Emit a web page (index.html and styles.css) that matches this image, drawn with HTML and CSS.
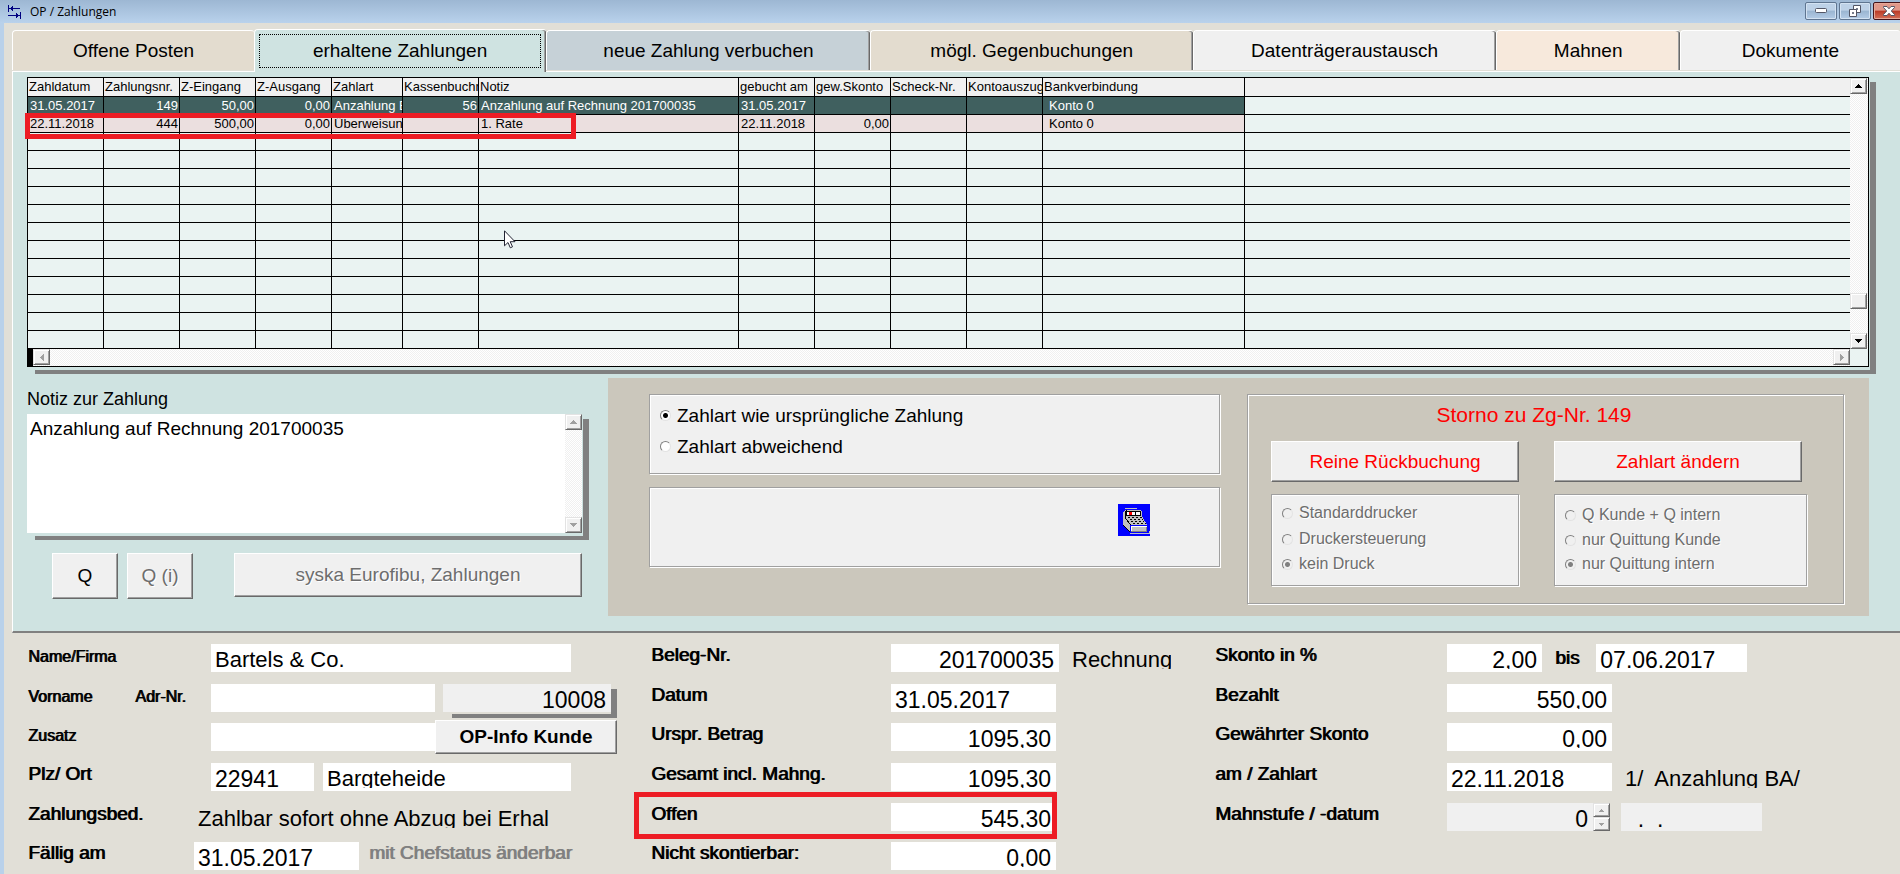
FILE: index.html
```html
<!DOCTYPE html>
<html lang="de">
<head>
<meta charset="utf-8">
<title>OP / Zahlungen</title>
<link rel="stylesheet" href="styles.css">
</head>
<body>
<header class="titlebar">
  <svg class="app-icon" width="13" height="14" viewBox="0 0 13 14" fill="none" stroke="#000080" stroke-width="1">
    <path d="M.5 0v7M1 3.500h11M12.500 7v7M0 10.500h12"/>
    <path d="M4.500 1v5M3.500 2v3M2.500 3v1M8.500 8v5M9.500 9v3M10.500 10v1"/>
  </svg>
  <h1 class="title">OP / Zahlungen</h1>
  <div class="win-buttons">
    <button class="win-btn" type="button" aria-label="Minimieren">
      <svg width="12" height="6" viewBox="0 0 12 6"><rect x=".5" y=".5" width="11" height="4" rx="1" fill="#fff" stroke="#535666"/></svg>
    </button>
    <button class="win-btn" type="button" aria-label="Wiederherstellen">
      <svg width="12" height="12" viewBox="0 0 12 12" stroke="#535666"><path d="M4.500.5h7v7h-7z" fill="#fff"/><path d="M7.500 3.500h1v1h-1z" fill="#9ab4d0"/><path d="M.5 4.500h7v7h-7z" fill="#fff"/><path d="M3.500 7.500h1v1h-1z" fill="#9ab4d0"/></svg>
    </button>
    <button class="win-btn close" type="button" aria-label="Schließen">
      <svg width="12" height="10" viewBox="0 0 12 10"><path d="M.5.5h3.500L6 2.800 8 .5h3.500v1L8.300 5l3.200 3.500v1H8L6 7.200 4 9.500H.5v-1L3.700 5 .5 1.500z" fill="#fff" stroke="#535666"/></svg>
    </button>
  </div>
</header>

<main class="window">
  <nav class="tabs" role="tablist">
    <button class="tab t-posten" role="tab" type="button">Offene Posten</button>
    <button class="tab t-erhalten active" role="tab" type="button" aria-selected="true"><span class="focus">erhaltene Zahlungen</span></button>
    <button class="tab t-neu" role="tab" type="button">neue Zahlung verbuchen</button>
    <button class="tab t-gegen" role="tab" type="button">mögl. Gegenbuchungen</button>
    <button class="tab t-daten" role="tab" type="button">Datenträgeraustausch</button>
    <button class="tab t-mahnen" role="tab" type="button">Mahnen</button>
    <button class="tab t-doku" role="tab" type="button">Dokumente</button>
  </nav>

  <section class="panel">
    <div class="grid-frame shadowed">
      <table class="payments">
        <colgroup><col class="w76"><col class="w76"><col class="w76"><col class="w76"><col class="w71"><col class="w76"><col class="w260"><col class="w76"><col class="w76"><col class="w76"><col class="w76"><col class="w202"><col></colgroup>
        <thead>
          <tr><th>Zahldatum</th><th>Zahlungsnr.</th><th>Z-Eingang</th><th>Z-Ausgang</th><th>Zahlart</th><th>Kassenbuchnr</th><th>Notiz</th><th>gebucht am</th><th>gew.Skonto</th><th>Scheck-Nr.</th><th>Kontoauszug</th><th>Bankverbindung</th><th></th></tr>
        </thead>
        <tbody>
          <tr class="selected"><td>31.05.2017</td><td class="num">149</td><td class="num">50,00</td><td class="num">0,00</td><td>Anzahlung B</td><td class="num">56</td><td>Anzahlung auf Rechnung 201700035</td><td>31.05.2017</td><td></td><td></td><td></td><td class="bank">Konto 0</td><td></td></tr>
          <tr class="rose"><td>22.11.2018</td><td class="num">444</td><td class="num">500,00</td><td class="num">0,00</td><td>Überweisung</td><td></td><td>1. Rate</td><td>22.11.2018</td><td class="num">0,00</td><td></td><td></td><td class="bank">Konto 0</td><td></td></tr>
          <tr><td></td><td></td><td></td><td></td><td></td><td></td><td></td><td></td><td></td><td></td><td></td><td></td><td></td></tr>
          <tr><td></td><td></td><td></td><td></td><td></td><td></td><td></td><td></td><td></td><td></td><td></td><td></td><td></td></tr>
          <tr><td></td><td></td><td></td><td></td><td></td><td></td><td></td><td></td><td></td><td></td><td></td><td></td><td></td></tr>
          <tr><td></td><td></td><td></td><td></td><td></td><td></td><td></td><td></td><td></td><td></td><td></td><td></td><td></td></tr>
          <tr><td></td><td></td><td></td><td></td><td></td><td></td><td></td><td></td><td></td><td></td><td></td><td></td><td></td></tr>
          <tr><td></td><td></td><td></td><td></td><td></td><td></td><td></td><td></td><td></td><td></td><td></td><td></td><td></td></tr>
          <tr><td></td><td></td><td></td><td></td><td></td><td></td><td></td><td></td><td></td><td></td><td></td><td></td><td></td></tr>
          <tr><td></td><td></td><td></td><td></td><td></td><td></td><td></td><td></td><td></td><td></td><td></td><td></td><td></td></tr>
          <tr><td></td><td></td><td></td><td></td><td></td><td></td><td></td><td></td><td></td><td></td><td></td><td></td><td></td></tr>
          <tr><td></td><td></td><td></td><td></td><td></td><td></td><td></td><td></td><td></td><td></td><td></td><td></td><td></td></tr>
          <tr><td></td><td></td><td></td><td></td><td></td><td></td><td></td><td></td><td></td><td></td><td></td><td></td><td></td></tr>
          <tr><td></td><td></td><td></td><td></td><td></td><td></td><td></td><td></td><td></td><td></td><td></td><td></td><td></td></tr>
        </tbody>
      </table>
      <div class="vscroll">
        <button class="sb" type="button" aria-label="Nach oben"><svg width="7" height="4" viewBox="0 0 7 4"><path d="M3 0h1v1h1v1h1v1h1v1H0V3h1V2h1V1h1z"/></svg></button>
        <span class="sb thumb"></span>
        <button class="sb" type="button" aria-label="Nach unten"><svg width="7" height="4" viewBox="0 0 7 4"><path d="M0 0h7v1H6v1H5v1H4v1H3V3H2V2H1V1H0z"/></svg></button>
      </div>
      <div class="hscroll">
        <button class="sb off" type="button" disabled aria-label="Nach links"><svg width="4" height="7" viewBox="0 0 4 7"><path d="M4 0v7H3V6H2V5H1V4H0V3h1V2h1V1h1V0z"/></svg></button>
        <button class="sb off" type="button" disabled aria-label="Nach rechts"><svg width="4" height="7" viewBox="0 0 4 7"><path d="M0 0v7h1V6h1V5h1V4h1V3H3V2H2V1H1V0z"/></svg></button>
      </div>
      <span class="mark mark-row"></span>
      <svg class="cursor" width="12" height="19" viewBox="0 0 12 19"><path d="M.5.8v15l3.500-3.300 2.300 5.300 2.200-1-2.300-5.100h4.800z" fill="#fff" stroke="#222433"/></svg>
    </div>

    <div class="lower">
      <div class="note-col">
        <label class="note-label" for="notiz">Notiz zur Zahlung</label>
        <div class="note shadowed">
          <textarea id="notiz">Anzahlung auf Rechnung 201700035</textarea>
          <div class="vscroll">
            <button class="sb off" type="button" disabled aria-label="Notiz nach oben"><svg width="7" height="4" viewBox="0 0 7 4"><path d="M3 0h1v1h1v1h1v1h1v1H0V3h1V2h1V1h1z"/></svg></button>
            <button class="sb off" type="button" disabled aria-label="Notiz nach unten"><svg width="7" height="4" viewBox="0 0 7 4"><path d="M0 0h7v1H6v1H5v1H4v1H3V3H2V2H1V1H0z"/></svg></button>
          </div>
        </div>
        <div class="note-actions">
          <button class="btn small" type="button">Q</button>
          <button class="btn small" type="button" disabled>Q (i)</button>
          <button class="btn wide" type="button" disabled>syska Eurofibu, Zahlungen</button>
        </div>
      </div>

      <div class="storno-area">
        <div class="pay-kind">
          <div class="box kinds" role="radiogroup" aria-label="Zahlart">
            <label class="opt"><input type="radio" name="zahlart" checked>Zahlart wie ursprüngliche Zahlung</label>
            <label class="opt"><input type="radio" name="zahlart">Zahlart abweichend</label>
          </div>
          <div class="box register">
            <button class="kasse" type="button" aria-label="Kasse">
              <svg width="32" height="32" viewBox="0 0 32 32" shape-rendering="crispEdges">
                <path fill="#00f" d="M0 0h32v32H0z"/>
                <path fill="#c0c0c0" d="M7 6h15l2 2v4l5 9H13v7l-8-7V9z"/>
                <path fill="none" stroke="#c0c0c0" d="M7 4.500h12M31.500 27v2.500H12"/>
                <path fill="none" stroke="#000" d="M7.500 14V8.500l1-2M7.500 14l5 7M5.500 21.500l7 7"/>
                <path fill="#000" d="M8 7h15v5H8z"/>
                <path fill="#fff" d="M9 8h13v3H9z"/>
                <path fill="#f00" d="M11 8h3v3h-3z"/>
                <path fill="#000" d="M17 8h1v3h-1z"/>
                <path fill="none" stroke="#000" stroke-dasharray="2 2" d="M10 13.500h14M12 15.500h13M13 17.500h13M15 19.500h13"/>
                <path fill="#00f" d="M12 21h17v1H13v6h-1z"/>
                <path fill="#fff" d="M13 22h16v6H13z"/>
                <path fill="#c0c0c0" d="M14 23h14v4H14z"/>
                <path fill="none" stroke="#808080" d="M13 27.500h15.500V23"/>
              </svg>
            </button>
          </div>
        </div>
        <fieldset class="storno">
          <legend class="storno-title">Storno zu Zg-Nr. 149</legend>
          <div class="storno-col">
            <button class="btn red" type="button">Reine Rückbuchung</button>
            <div class="box printer" role="radiogroup" aria-label="Drucker">
              <label class="opt off"><input type="radio" name="druck" disabled>Standarddrucker</label>
              <label class="opt off"><input type="radio" name="druck" disabled>Druckersteuerung</label>
              <label class="opt off"><input type="radio" name="druck" disabled checked>kein Druck</label>
            </div>
          </div>
          <div class="storno-col">
            <button class="btn red" type="button">Zahlart ändern</button>
            <div class="box printer receipt" role="radiogroup" aria-label="Quittung">
              <label class="opt off"><input type="radio" name="quittung" disabled>Q Kunde + Q intern</label>
              <label class="opt off"><input type="radio" name="quittung" disabled>nur Quittung Kunde</label>
              <label class="opt off"><input type="radio" name="quittung" disabled checked>nur Quittung intern</label>
            </div>
          </div>
        </fieldset>
      </div>
    </div>
  </section>

  <form class="details">
    <div class="col customer">
      <div class="row"><label class="lbl sm" for="name">Name/Firma</label><input class="field text w360" id="name" value="Bartels &amp; Co."></div>
      <div class="row adr"><label class="lbl sm" for="vorname">Vorname</label><label class="lbl sm" for="adr">Adr-Nr.</label><input class="field text w224" id="vorname"><span class="adr-wrap shadowed"><input class="field num gray" id="adr" value="10008" readonly></span></div>
      <div class="row zusatz"><label class="lbl sm" for="zusatz">Zusatz</label><input class="field text w224" id="zusatz"><button class="btn info" type="button">OP-Info Kunde</button></div>
      <div class="row"><label class="lbl" for="plz">Plz/ Ort</label><input class="field w103" id="plz" value="22941"><input class="field text w248" id="ort" aria-label="Ort" value="Bargteheide"></div>
      <div class="row near"><span class="lbl">Zahlungsbed.</span><output class="field plain text w377">Zahlbar sofort ohne Abzug bei Erhal</output></div>
      <div class="row near"><label class="lbl" for="faellig">Fällig am</label><input class="field w165" id="faellig" value="31.05.2017"><span class="lbl hint">mit Chefstatus änderbar</span></div>
    </div>
    <div class="col invoice">
      <div class="row"><label class="lbl" for="beleg">Beleg-Nr.</label><input class="field num w168" id="beleg" value="201700035"><output class="field plain text w103">Rechnung</output></div>
      <div class="row"><label class="lbl" for="datum">Datum</label><input class="field w165" id="datum" value="31.05.2017"></div>
      <div class="row"><label class="lbl" for="betrag">Urspr. Betrag</label><input class="field num w165" id="betrag" value="1095,30"></div>
      <div class="row"><label class="lbl" for="gesamt">Gesamt incl. Mahng.</label><input class="field num w165" id="gesamt" value="1095,30"></div>
      <div class="row open"><label class="lbl" for="offen">Offen</label><input class="field num w165" id="offen" value="545,30"><span class="mark mark-open"></span></div>
      <div class="row"><label class="lbl" for="nicht">Nicht skontierbar:</label><input class="field num w165" id="nicht" value="0,00"></div>
    </div>
    <div class="col discount">
      <div class="row"><label class="lbl" for="skonto">Skonto in %</label><input class="field num w95" id="skonto" value="2,00"><label class="lbl bis" for="bis">bis</label><input class="field w151" id="bis" value="07.06.2017"></div>
      <div class="row"><label class="lbl" for="bezahlt">Bezahlt</label><input class="field num w165" id="bezahlt" value="550,00"></div>
      <div class="row"><label class="lbl" for="gewskonto">Gewährter Skonto</label><input class="field num w165" id="gewskonto" value="0,00"></div>
      <div class="row"><label class="lbl" for="am">am / Zahlart</label><input class="field w165" id="am" value="22.11.2018"><output class="field plain text pre">1/  Anzahlung BA/</output></div>
      <div class="row"><label class="lbl" for="stufe">Mahnstufe / -datum</label><span class="spin"><input class="field num gray w146" id="stufe" value="0" readonly><span class="arrows"><button class="sb off" type="button" disabled aria-label="Mahnstufe erhöhen"><svg width="5" height="3" viewBox="0 0 5 3"><path d="M2 0h1v1h1v1h1v1H0V2h1V1h1z"/></svg></button><button class="sb off" type="button" disabled aria-label="Mahnstufe senken"><svg width="5" height="3" viewBox="0 0 5 3"><path d="M0 0h5v1H4v1H3v1H2V2H1V1H0z"/></svg></button></span></span><input class="field gray w141" id="mahndatum" aria-label="Mahndatum" value="  .  ." readonly></div>
    </div>
  </form>
</main>
</body>
</html>
```
FILE: styles.css
```css
* { box-sizing: border-box; }

body {
  margin: 0;
  min-height: 100vh;
  display: flex;
  flex-direction: column;
  background: #e1dfd7;
  color: #000;
  font-family: "Liberation Sans", Arial, sans-serif;
  font-size: 19px;
  overflow-x: hidden;
}

button, input, textarea { font: inherit; color: inherit; margin: 0; }
button { padding: 0; }
svg { display: block; }

/* title bar */
.titlebar {
  display: flex;
  align-items: center;
  height: 23px;
  padding-left: 8px;
  background: linear-gradient(#9db7d3, #b9d2ec);
  overflow: hidden;
}
.title {
  margin: 0 0 0 9px;
  font: 12px/20px "Open Sans", "Noto Sans", sans-serif;
}
.win-buttons { display: flex; gap: 2px; margin: -1px -5px 0 auto; }
.win-btn {
  display: grid;
  place-items: center;
  width: 32px;
  height: 18px;
  border: 1px solid #5f7590;
  border-radius: 2px;
  box-shadow: inset 0 0 0 1px #d3e2f2;
  background: linear-gradient(#bdd1e7 45%, #9ab5d1 50%, #b4cce6);
}
.win-btn.close {
  border-color: #43141a;
  box-shadow: inset 0 0 0 1px #e6a898;
  background: linear-gradient(#e0988a 45%, #bb3a26 50%, #d3705a);
}

/* window body and tabs */
.window {
  flex: 1;
  display: flex;
  flex-direction: column;
  border-left: 4px solid #b9d1ea;
  padding: 6px 0 0 8px;
}
.tabs { display: flex; align-items: flex-end; height: 42px; }
.tab {
  position: relative;
  height: 40px;
  min-width: 0;
  margin-bottom: 1px;
  border: solid #fff;
  border-width: 1px 0 0 1px;
  border-radius: 4px 3px 0 0;
  box-shadow: inset -1px 0 #696969, inset -2px 0 #a0a0a0;
  white-space: nowrap;
}
.t-posten { flex: 242 1 0; background: #e3dccf; box-shadow: none; }
.t-erhalten { flex: 292 1 0; background: #cfe3e1; }
.t-neu { flex: 324 1 0; background: #c6d1d7; }
.t-gegen { flex: 323 1 0; background: #e3dccf; }
.t-daten { flex: 303 1 0; background: #f0f0f0; }
.t-mahnen { flex: 184 1 0; background: #f7e9dc; }
.t-doku { flex: 220 1 0; background: #f0f0f0; box-shadow: none; }
.tab.active { height: 43px; margin-bottom: -1px; }
.focus {
  display: grid;
  place-items: center;
  height: 34px;
  margin: 0 5px 1px 4px;
  border: 1px dotted #000;
}

.panel {
  padding: 5px 31px 15px 14px;
  background: #cfe3e1;
  border: solid #fff;
  border-width: 1px 0 2px 1px;
  border-bottom-color: #808080;
}

/* sunken drop shadow behind a framed part */
.shadowed { position: relative; z-index: 0; }
.shadowed::before {
  content: "";
  position: absolute;
  z-index: -1;
  inset: 5px -7px -7px 8px;
  border: solid #808080;
  border-width: 0 6px 4px 0;
}

/* payments table */
.grid-frame {
  display: grid;
  grid-template-columns: minmax(0, 1fr) 18px;
  border: 1px solid #000;
  background: #eaf3f2;
}
.grid-frame::before { inset: 4px -8px -8px 7px; }
.payments {
  width: 100%;
  table-layout: fixed;
  border-collapse: separate;
  border-spacing: 0;
  font-size: 13px;
}
.w76 { width: 76px; }
.w71 { width: 71px; }
.w260 { width: 260px; }
.w202 { width: 202px; }
.payments th, .payments td {
  height: 18px;
  padding: 0 1px 0 2px;
  border: solid #000;
  border-width: 0 1px 1px 0;
  line-height: 17px;
  font-weight: normal;
  text-align: left;
  white-space: nowrap;
  overflow: hidden;
}
.payments th {
  height: 19px;
  padding: 0 0 0 1px;
  line-height: 18px;
  background: #f0f0f0;
}
.payments th:last-child, .payments td:last-child { border-right: 0; }
.payments .num { text-align: right; }
.payments .bank { padding-left: 6px; }
.selected td:not(:last-child) { background: #40605f; color: #fff; }
.rose td:not(:last-child) { background: #ebdfdf; }

/* scroll bars */
.vscroll, .hscroll {
  display: flex;
  background: repeating-conic-gradient(#fff 0 25%, #f0f0f0 0 50%) 0 0 / 2px 2px;
}
.vscroll { flex-direction: column; justify-content: space-between; width: 18px; }
.hscroll { justify-content: space-between; height: 17px; border-left: 5px solid #000; }
.sb {
  display: grid;
  place-items: center;
  flex: none;
  width: 17px;
  height: 16px;
  border: 1px solid;
  border-color: #e3e3e3 #696969 #696969 #e3e3e3;
  box-shadow: inset 1px 1px #fff, inset -1px -1px #a0a0a0;
  background: #f0f0f0;
  fill: #000;
}
.sb.off { fill: #a0a0a0; }
.thumb { margin: auto 0 24px; }

.mark { position: absolute; border: 5px solid #ed1c24; pointer-events: none; }
.mark-row { left: -3px; top: 35px; width: 551px; height: 26px; }
.mark-open { left: -16px; top: -11px; width: 423px; height: 47px; }
.cursor { position: absolute; left: 476px; top: 152px; }

/* lower half of the panel */
.lower { display: flex; gap: 26px; margin-top: 11px; }
.note-col { flex: none; width: 555px; padding-top: 11px; }
.note-label { display: block; line-height: 20px; padding-bottom: 5px; font-size: 18px; }
.note { display: flex; height: 119px; }
.note textarea {
  flex: 1;
  padding: 4px 3px;
  border: 0;
  outline: 0;
  resize: none;
  line-height: 22px;
  overflow: hidden;
}
.note .vscroll { width: 17px; }
.note-actions { display: flex; align-items: flex-start; margin: 20px 0 0 25px; }

.btn {
  border: 1px solid;
  border-color: #fff #696969 #696969 #fff;
  box-shadow: inset -1px -1px #a0a0a0;
  background: #f0f0f0;
}
.btn:disabled { color: #6d6d6d; text-shadow: 1px 1px #fff; }
.btn.small { width: 66px; height: 46px; margin-right: 9px; }
.btn.wide { flex: 1; height: 44px; margin-left: 32px; }
.btn.red { height: 41px; color: #f00; }

.storno-area {
  flex: 1;
  display: grid;
  grid-template-columns: 571fr 597fr;
  gap: 27px;
  min-height: 238px;
  padding: 16px 25px 12px 41px;
  background: #cbc7bc;
}
.box {
  border: 1px solid #a0a0a0;
  box-shadow: inset 1px 1px #fff, 1px 1px #fff;
  background: #f0f0f0;
}
.pay-kind { display: flex; flex-direction: column; gap: 13px; }
.pay-kind .box { height: 80px; }
.kinds { padding: 5px 10px; }
.opt { display: flex; align-items: center; gap: 6px; height: 31px; }
.opt input {
  appearance: none;
  flex: none;
  width: 11px;
  height: 11px;
  border: 1px solid;
  border-color: #808080 #e3e3e3 #e3e3e3 #808080;
  border-radius: 50%;
  background: #fff;
}
.opt input:checked { background: radial-gradient(#000 0 2px, #fff 3px); }
.opt.off { font-size: 16px; color: #6d6d6d; text-shadow: 1px 1px #fff; }
.opt.off input { background: #f0f0f0; }
.opt.off input:checked { background: radial-gradient(#808080 0 2px, #f0f0f0 3px); }
.register { display: flex; justify-content: flex-end; padding: 16px 69px 0 0; }
.kasse { width: 32px; height: 32px; border: 0; background: none; }

.storno {
  display: grid;
  grid-template-columns: 248fr 253fr;
  column-gap: 35px;
  align-content: start;
  min-width: 0;
  margin: 0;
  padding: 9px 36px 16px 23px;
  border: 1px solid #a0a0a0;
  box-shadow: inset 1px 1px #fff, 1px 1px #fff;
}
.storno-title {
  float: left;
  grid-column: 1 / -1;
  width: 100%;
  padding: 0 10px 15px 0;
  color: #f00;
  font-size: 21px;
  line-height: 22px;
  text-align: center;
}
.storno-col { display: flex; flex-direction: column; gap: 12px; }
.storno-col:last-child .btn { margin-right: 5px; }
.printer { height: 92px; padding: 5px 10px; }
.printer .opt { height: 26px; }
.printer .opt:last-child { height: 24px; }
.receipt { padding-top: 7px; }
.receipt .opt:nth-child(2) { height: 24px; }

/* invoice details */
.details {
  display: grid;
  grid-template-columns: 623fr 564fr 686fr;
  padding: 11px 0 4px 15px;
}
.col { display: grid; grid-template-rows: 40px 39px 40px 40px 39px 28px; min-width: 0; }
.row { display: flex; align-items: flex-start; position: relative; min-width: 0; }
.lbl {
  flex: none;
  line-height: 22px;
  text-shadow: 1px 0 currentColor;
  white-space: nowrap;
}
.lbl:first-child { padding-left: 1px; }
.lbl.sm { font-size: 16px; line-height: 26px; }
.customer .lbl:first-child { width: 184px; }
.customer .adr .lbl:first-child { width: 108px; }
.adr .lbl:nth-child(2) { width: 76px; }
.customer .near .lbl:first-child { width: 167px; }
.invoice .lbl:first-child { width: 241px; }
.discount .lbl:first-child { width: 233px; }
.lbl.hint { margin-left: 10px; color: #808080; }
.lbl.bis { margin: 0 17px 0 13px; line-height: 28px; }

.field {
  display: block;
  flex: none;
  height: 28px;
  padding: 7px 5px 0 4px;
  border: 0 solid #fff;
  border-bottom-width: 3px;
  border-radius: 0;
  outline: 0;
  background: #fff;
  font-size: 23px;
  line-height: 26px;
  white-space: pre;
  overflow: hidden;
}
.field.text { font-size: 22px; }
.field.num { text-align: right; }
.field.gray { background: #f0f0f0; border-color: #f0f0f0; }
.field.plain {
  padding-top: 3px;
  background: none;
  border-color: transparent;
}
.field + .field { margin-left: 9px; }
.spin + .field { margin-left: 11px; }
.w95 { width: 95px; }
.w103 { width: 103px; }
.w141 { width: 141px; }
.w146 { width: 146px; }
.w151 { width: 151px; }
.w165 { width: 165px; }
.w168 { width: 168px; }
.w224 { width: 224px; }
.w248 { width: 248px; }
.w360 { width: 360px; }
.w377 { width: 377px; }
.adr-wrap { width: 168px; margin-left: 8px; }
.adr-wrap .field { width: 100%; }
.adr-wrap::before { inset: 5px -6px -6px 9px; }
.btn.info { width: 182px; height: 34px; margin-top: -3px; font-weight: bold; }
.spin { display: flex; }
.arrows { display: flex; flex-direction: column; background: #f0f0f0; }
.arrows .sb { height: 14px; }
```
